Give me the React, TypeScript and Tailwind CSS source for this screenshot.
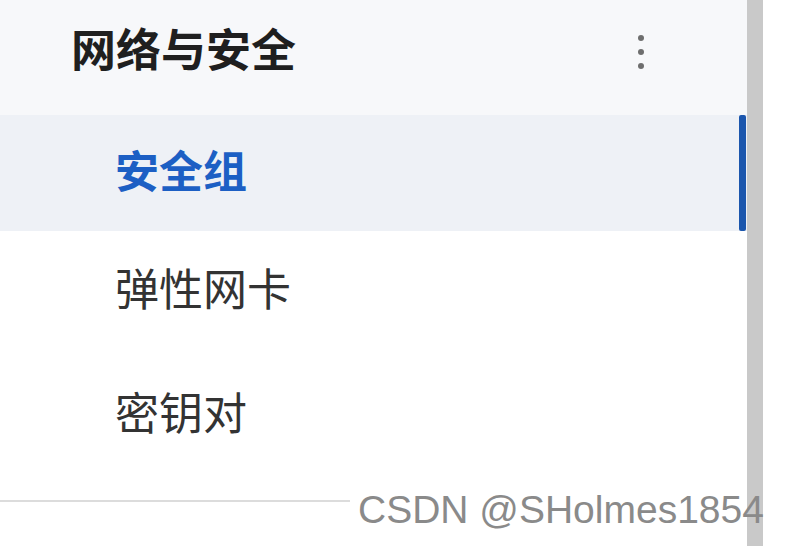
import React from "react";

const cjk = { fontFamily: '"Noto Sans CJK SC", "Noto Sans", sans-serif' };

export default function App() {
  return (
    <div className="relative flex h-[546px] w-[800px] overflow-hidden bg-white" style={cjk}>
      <div className="flex w-[747px] flex-col">
        <div className="flex h-[115px] items-start justify-between bg-[#f7f8fa] pl-[71px] pr-[103px]">
          <span className="mt-[25px] text-[45px] font-bold leading-none text-[#1f1f1f]">网络与安全</span>
          <div className="mt-[35px] flex flex-col gap-[8px]">
            <span className="h-[6px] w-[6px] rounded-full bg-[#6e6e6e]" />
            <span className="h-[6px] w-[6px] rounded-full bg-[#6e6e6e]" />
            <span className="h-[6px] w-[6px] rounded-full bg-[#6e6e6e]" />
          </div>
        </div>
        <div className="relative flex h-[116px] items-center bg-[#eef1f6] pb-[9px] pl-[115px]">
          <span className="text-[44px] font-bold leading-none text-[#1c5fc4]">安全组</span>
          <span className="absolute top-0 right-[1px] bottom-0 w-[7px] rounded-[2px] bg-[#1b56ad]" />
        </div>
        <div className="flex h-[121px] items-center pb-[9px] pl-[115px]">
          <span className="text-[44px] leading-none text-[#333333]">弹性网卡</span>
        </div>
        <div className="flex h-[120px] items-center pb-[3px] pl-[115px]">
          <span className="text-[44px] leading-none text-[#333333]">密钥对</span>
        </div>
        <div className="mt-[28px] h-[2px] w-[350px] bg-[#dcdcdc]" />
      </div>
      <div className="h-full w-[16px] bg-[#c9c9c9]" />
      <div className="flex-1 bg-white" />
      <div
        className="absolute top-[490px] left-[358px] text-[39px] leading-none whitespace-nowrap text-[#8a8a8a]"
        style={{ fontFamily: '"Liberation Sans", Arial, sans-serif' }}
      >
        CSDN @SHolmes1854
      </div>
    </div>
  );
}
